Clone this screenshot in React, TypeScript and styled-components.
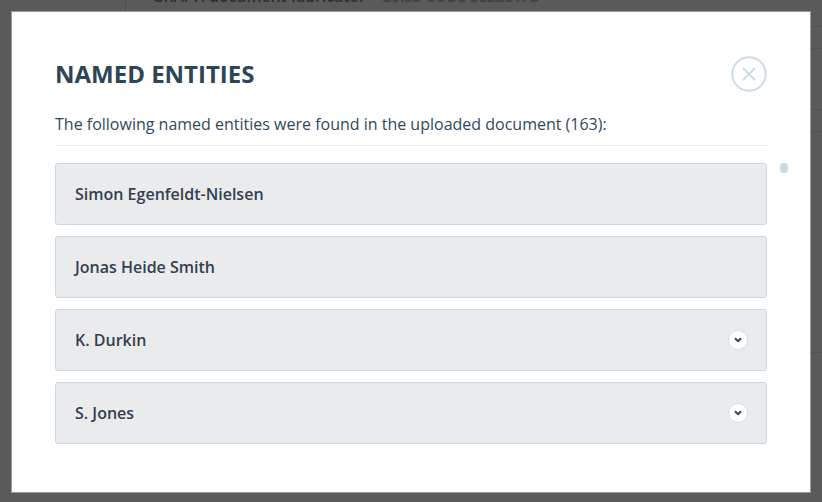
import React from "react";
import styled, { createGlobalStyle } from "styled-components";

const Global = createGlobalStyle`
  html, body { margin: 0; padding: 0; height: 100%; overflow: hidden; }
  body { font-family: "Open Sans", "Liberation Sans", sans-serif; background: #5a5a5a; }
`;

const Page = styled.div`
  position: relative;
  width: 822px;
  height: 502px;
  overflow: hidden;
  background: #5a5a5a;
`;

const PageHeading = styled.div`
  position: absolute;
  top: -14px;
  left: 152px;
  display: flex;
  gap: 17px;
  font-size: 15.7px;
  line-height: 20px;
  font-weight: 600;
  white-space: nowrap;
  color: #2a2f33;
`;

const PageCode = styled.span`
  color: #3f4447;
  font-size: 15px;
  font-weight: 700;
`;

const PageRule = styled.div<{ $x: number }>`
  position: absolute;
  top: 0;
  height: 11px;
  left: ${(p) => p.$x}px;
  width: 1px;
  background: #4c4c4c;
`;

const SideRule = styled.div<{ $y: number }>`
  position: absolute;
  right: 0;
  width: 11px;
  top: ${(p) => p.$y}px;
  height: 1px;
  background: #525252;
`;

const Modal = styled.section`
  position: absolute;
  left: 11px;
  top: 11px;
  width: 800px;
  height: 482px;
  box-sizing: border-box;
  background: #fff;
  border: 1px solid #9a9a9a;
  padding: 43px 43px 0;
  display: flex;
  flex-direction: column;
`;

const Header = styled.header`
  display: flex;
  align-items: center;
  justify-content: space-between;
  height: 38px;
`;

const Title = styled.h2`
  margin: 0;
  font-size: 24px;
  line-height: 38px;
  font-weight: 700;
  color: #2c4557;
`;

const CloseButton = styled.button`
  width: 36px;
  height: 36px;
  padding: 0;
  border: 0;
  background: none;
  display: block;
  color: #cddbe7;
`;

const Lead = styled.p`
  margin: 20px 0 0;
  padding-bottom: 10px;
  font-size: 16px;
  line-height: 22px;
  color: #32485a;
  border-bottom: 1px solid #e9ebee;
`;

const ListArea = styled.div`
  position: relative;
  margin-top: 17px;
`;

const List = styled.div`
  display: flex;
  flex-direction: column;
  gap: 11px;
`;

const Row = styled.div`
  height: 62px;
  box-sizing: border-box;
  display: flex;
  align-items: center;
  justify-content: space-between;
  padding: 0 19px;
  background: #e9ebed;
  border: 1px solid #c9d8e4;
  border-radius: 3px;
`;

const Name = styled.span`
  font-size: 16px;
  font-weight: 600;
  color: #33404f;
`;

const Expand = styled.span`
  width: 20px;
  height: 20px;
  box-sizing: border-box;
  margin-right: -1px;
  border: 1px solid #d3e0e8;
  border-radius: 50%;
  background: #fff;
  display: flex;
  align-items: center;
  justify-content: center;
  color: #2c4557;
`;

const ScrollThumb = styled.div`
  position: absolute;
  top: 0;
  right: -21px;
  width: 8px;
  height: 10px;
  border-radius: 4px;
  background: #cbd8e6;
`;

const entities = [
  { name: "Simon Egenfeldt-Nielsen", expandable: false },
  { name: "Jonas Heide Smith", expandable: false },
  { name: "K. Durkin", expandable: true },
  { name: "S. Jones", expandable: true },
];

export default function App() {
  return (
    <Page>
      <Global />
      <PageRule $x={125} />
      <PageHeading>
        <span>GRAPH document fabricator</span>
        <PageCode>20:33 CODE 5E22E1FD</PageCode>
      </PageHeading>
      {[26, 48, 109, 131, 352].map((y) => (
        <SideRule key={y} $y={y} />
      ))}
      <Modal>
        <Header>
          <Title>NAMED ENTITIES</Title>
          <CloseButton aria-label="Close">
            <svg width="36" height="36" viewBox="0 0 36 36" fill="none" stroke="currentColor">
              <circle cx="18" cy="18" r="16.75" strokeWidth="2" />
              <path d="M12 12L24 24M24 12L12 24" strokeWidth="2" />
            </svg>
          </CloseButton>
        </Header>
        <Lead>The following named entities were found in the uploaded document (163):</Lead>
        <ListArea>
          <List>
            {entities.map((e) => (
              <Row key={e.name}>
                <Name>{e.name}</Name>
                {e.expandable && (
                  <Expand>
                    <svg width="8" height="6" viewBox="0 0 8 6" fill="none" stroke="currentColor" strokeWidth="2">
                      <path d="M1 1.2L4 4.2L7 1.2" />
                    </svg>
                  </Expand>
                )}
              </Row>
            ))}
          </List>
          <ScrollThumb />
        </ListArea>
      </Modal>
    </Page>
  );
}
